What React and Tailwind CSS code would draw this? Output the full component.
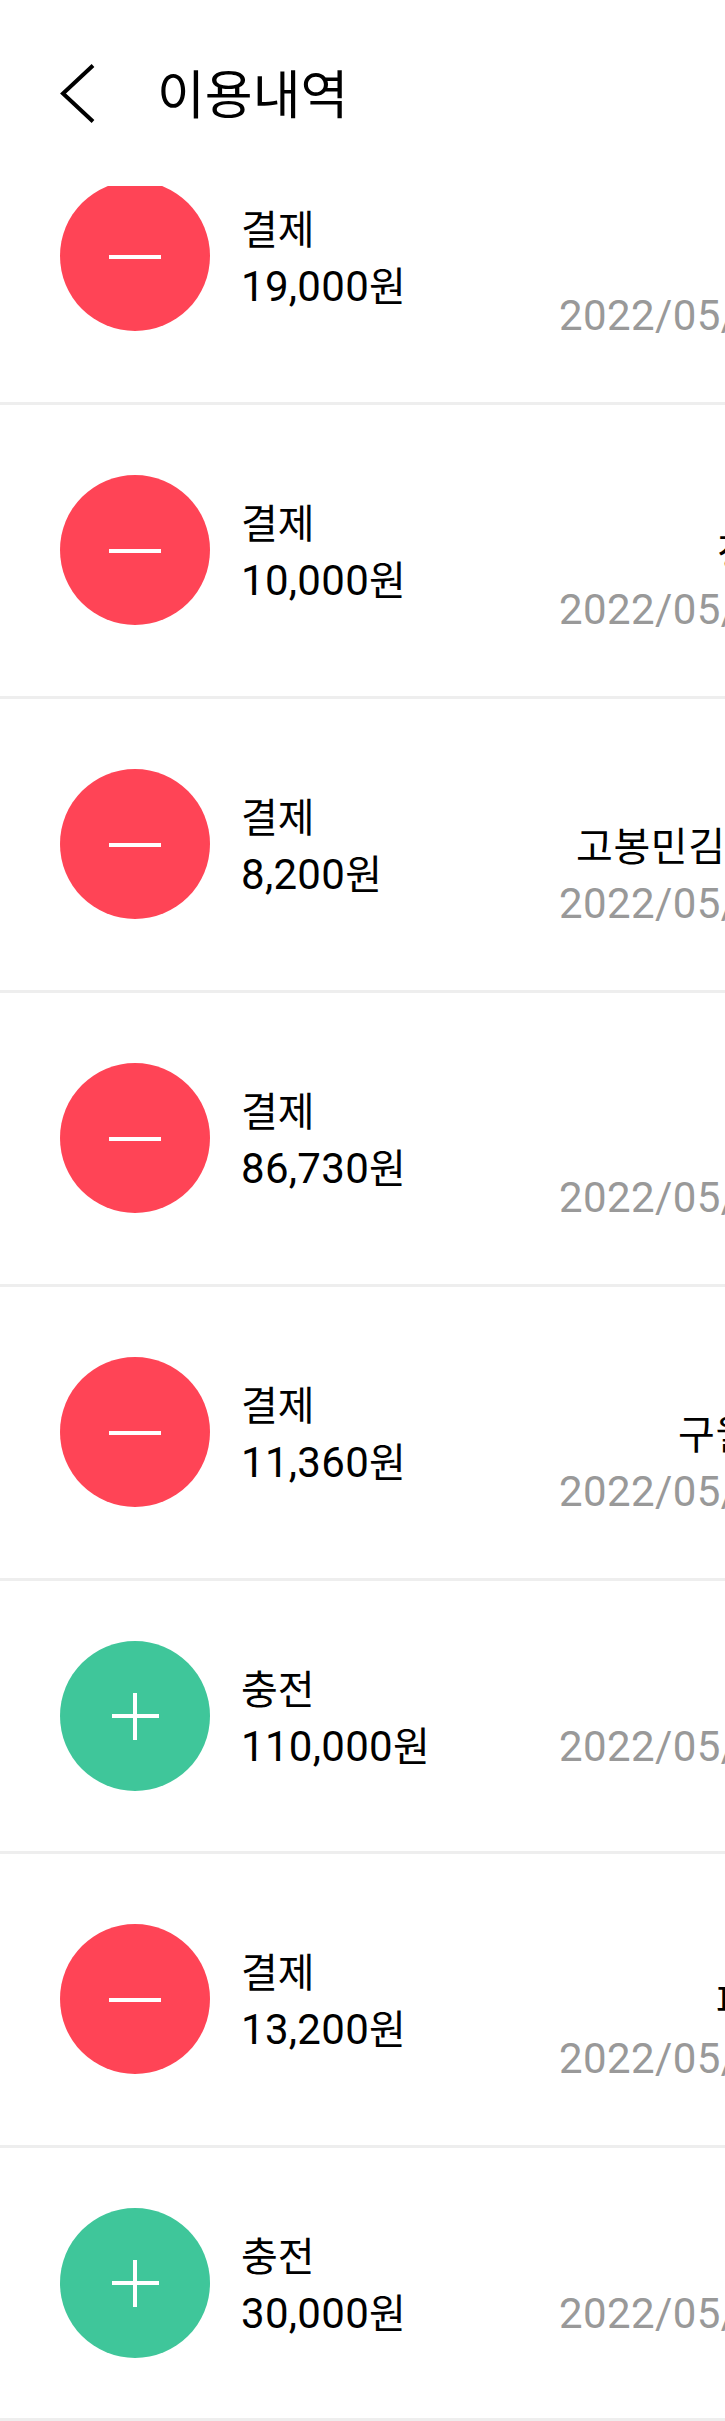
const transactions = [
  { id: 1, type: 'pay', amount: '19,000', store: '', date: '2022/05/' },
  { id: 2, type: 'pay', amount: '10,000', store: '정', date: '2022/05/', indent: 'pl-[158px]' },
  { id: 3, type: 'pay', amount: '8,200', store: '고봉민김', date: '2022/05/', indent: 'pl-[17px]' },
  { id: 4, type: 'pay', amount: '86,730', store: '', date: '2022/05/' },
  { id: 5, type: 'pay', amount: '11,360', store: '구월', date: '2022/05/', indent: 'pl-[119px]' },
  { id: 6, type: 'charge', amount: '110,000', date: '2022/05/' },
  { id: 7, type: 'pay', amount: '13,200', store: '파', date: '2022/05/', indent: 'pl-[157px]' },
  { id: 8, type: 'charge', amount: '30,000', date: '2022/05/' },
];

const TypeIcon = ({ type }) => (
  <svg className="size-[150px] shrink-0" viewBox="0 0 150 150" fill="none">
    <circle cx="75" cy="75" r="75" fill={type === 'pay' ? '#ff4456' : '#3fc69a'} />
    {type === 'pay' ? (
      <path d="M49 76h52" stroke="#fff" strokeWidth="4" />
    ) : (
      <path d="M52 75h47M75 52v47" stroke="#fff" strokeWidth="4" />
    )}
  </svg>
);

const TransactionRow = ({ item }) => {
  const isPay = item.type === 'pay';

  return (
    <li
      className={`flex shrink-0 border-b-3 border-[#eeeeee] pl-[60px] ${
        isPay ? 'h-[294px] pt-[70px]' : 'h-[273px] pt-[60px]'
      }`}
    >
      <TypeIcon type={item.type} />
      <div className="ml-[31px] mt-5 w-[318px] shrink-0 leading-[57px]">
        <p className="h-[57px] pt-px text-[40px]">{isPay ? '결제' : '충전'}</p>
        <p className="h-[57px] tracking-[0.3px]">
          {item.amount}
          <span className="text-[40px]">원</span>
        </p>
      </div>
      <div className={`min-w-0 flex-1 overflow-hidden whitespace-nowrap leading-[57px] ${isPay ? 'mt-[49px]' : 'mt-5'}`}>
        <p className={`h-[57px] pt-px text-[40px] tracking-[0.6px] ${item.indent ?? ''}`}>{item.store}</p>
        <p className="h-[57px] tracking-[0.4px] text-[#999999]">{item.date}</p>
      </div>
    </li>
  );
};

const App = () => {
  return (
    <div className="flex h-[2421px] w-[725px] flex-col overflow-hidden bg-white font-[Roboto,'Noto_Sans_CJK_KR',sans-serif] text-[42px] text-black">
      <header className="flex h-[186px] shrink-0 items-center pl-[60px]">
        <svg className="h-[60px] w-[36px]" viewBox="0 0 36 60" fill="none">
          <path d="M33 2.5L3 30.5l30 28" stroke="#000" strokeWidth="4" />
        </svg>
        <h1 className="ml-[61px] pt-2 text-[52px]">이용내역</h1>
      </header>

      {/* list is scrolled, first row sits under the header */}
      <ul className="flex min-h-0 flex-1 flex-col justify-end overflow-hidden">
        {transactions.map((item) => (
          <TransactionRow key={item.id} item={item} />
        ))}
      </ul>
    </div>
  );
};

export default App;
